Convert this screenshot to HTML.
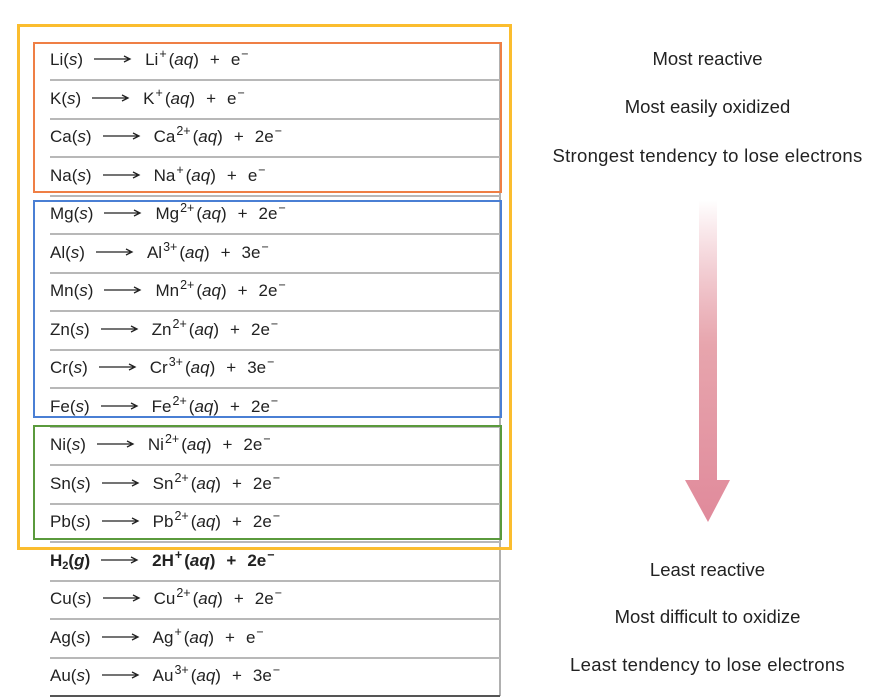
<!DOCTYPE html>
<html><head><meta charset="utf-8"><style>
body{margin:0;width:895px;height:696px;background:#fff;position:relative;overflow:hidden;font-family:"Liberation Sans",sans-serif;color:#222}
.row{position:absolute;left:50px;width:450px;height:38px;border-bottom:2px solid #b8b8b8;font-size:17px;line-height:38px;white-space:nowrap}
.row i{font-style:italic}
.row sup{font-size:12.5px;vertical-align:7px;line-height:0;margin:0 2px 0 1px}
.row sub{font-size:11px;vertical-align:-3px;line-height:0}
.p{margin:0 11px}
.ar{display:inline-block;width:38px;height:10px;margin:0 13px 0 11px;vertical-align:1px}
.b{font-weight:bold}
.vl{position:absolute;left:499px;top:42px;width:2px;height:654px;background:#b0b0b0}
.box{position:absolute;box-sizing:border-box}
.rt{position:absolute;left:520px;width:375px;text-align:center;font-size:18.5px;color:#222}
</style></head><body>
<div class="vl"></div>
<div class="row" style="top:41px">Li(<i>s</i>)<svg class="ar" viewBox="0 0 38 10"><path d="M0 5H35M30 2L36 5L30 8" stroke="#222" stroke-width="1.3" fill="none"/></svg>Li<sup>+</sup>(<i>aq</i>)<span class="p">+</span>e<sup>−</sup></div>
<div class="row" style="top:79.5px">K(<i>s</i>)<svg class="ar" viewBox="0 0 38 10"><path d="M0 5H35M30 2L36 5L30 8" stroke="#222" stroke-width="1.3" fill="none"/></svg>K<sup>+</sup>(<i>aq</i>)<span class="p">+</span>e<sup>−</sup></div>
<div class="row" style="top:118px">Ca(<i>s</i>)<svg class="ar" viewBox="0 0 38 10"><path d="M0 5H35M30 2L36 5L30 8" stroke="#222" stroke-width="1.3" fill="none"/></svg>Ca<sup>2+</sup>(<i>aq</i>)<span class="p">+</span>2e<sup>−</sup></div>
<div class="row" style="top:156.5px">Na(<i>s</i>)<svg class="ar" viewBox="0 0 38 10"><path d="M0 5H35M30 2L36 5L30 8" stroke="#222" stroke-width="1.3" fill="none"/></svg>Na<sup>+</sup>(<i>aq</i>)<span class="p">+</span>e<sup>−</sup></div>
<div class="row" style="top:195px">Mg(<i>s</i>)<svg class="ar" viewBox="0 0 38 10"><path d="M0 5H35M30 2L36 5L30 8" stroke="#222" stroke-width="1.3" fill="none"/></svg>Mg<sup>2+</sup>(<i>aq</i>)<span class="p">+</span>2e<sup>−</sup></div>
<div class="row" style="top:233.5px">Al(<i>s</i>)<svg class="ar" viewBox="0 0 38 10"><path d="M0 5H35M30 2L36 5L30 8" stroke="#222" stroke-width="1.3" fill="none"/></svg>Al<sup>3+</sup>(<i>aq</i>)<span class="p">+</span>3e<sup>−</sup></div>
<div class="row" style="top:272px">Mn(<i>s</i>)<svg class="ar" viewBox="0 0 38 10"><path d="M0 5H35M30 2L36 5L30 8" stroke="#222" stroke-width="1.3" fill="none"/></svg>Mn<sup>2+</sup>(<i>aq</i>)<span class="p">+</span>2e<sup>−</sup></div>
<div class="row" style="top:310.5px">Zn(<i>s</i>)<svg class="ar" viewBox="0 0 38 10"><path d="M0 5H35M30 2L36 5L30 8" stroke="#222" stroke-width="1.3" fill="none"/></svg>Zn<sup>2+</sup>(<i>aq</i>)<span class="p">+</span>2e<sup>−</sup></div>
<div class="row" style="top:349px">Cr(<i>s</i>)<svg class="ar" viewBox="0 0 38 10"><path d="M0 5H35M30 2L36 5L30 8" stroke="#222" stroke-width="1.3" fill="none"/></svg>Cr<sup>3+</sup>(<i>aq</i>)<span class="p">+</span>3e<sup>−</sup></div>
<div class="row" style="top:387.5px">Fe(<i>s</i>)<svg class="ar" viewBox="0 0 38 10"><path d="M0 5H35M30 2L36 5L30 8" stroke="#222" stroke-width="1.3" fill="none"/></svg>Fe<sup>2+</sup>(<i>aq</i>)<span class="p">+</span>2e<sup>−</sup></div>
<div class="row" style="top:426px">Ni(<i>s</i>)<svg class="ar" viewBox="0 0 38 10"><path d="M0 5H35M30 2L36 5L30 8" stroke="#222" stroke-width="1.3" fill="none"/></svg>Ni<sup>2+</sup>(<i>aq</i>)<span class="p">+</span>2e<sup>−</sup></div>
<div class="row" style="top:464.5px">Sn(<i>s</i>)<svg class="ar" viewBox="0 0 38 10"><path d="M0 5H35M30 2L36 5L30 8" stroke="#222" stroke-width="1.3" fill="none"/></svg>Sn<sup>2+</sup>(<i>aq</i>)<span class="p">+</span>2e<sup>−</sup></div>
<div class="row" style="top:503px">Pb(<i>s</i>)<svg class="ar" viewBox="0 0 38 10"><path d="M0 5H35M30 2L36 5L30 8" stroke="#222" stroke-width="1.3" fill="none"/></svg>Pb<sup>2+</sup>(<i>aq</i>)<span class="p">+</span>2e<sup>−</sup></div>
<div class="row b" style="top:541.5px">H<sub>2</sub>(<i>g</i>)<svg class="ar" viewBox="0 0 38 10"><path d="M0 5H35M30 2L36 5L30 8" stroke="#222" stroke-width="1.3" fill="none"/></svg>2H<sup>+</sup>(<i>aq</i>)<span class="p">+</span>2e<sup>−</sup></div>
<div class="row" style="top:580px">Cu(<i>s</i>)<svg class="ar" viewBox="0 0 38 10"><path d="M0 5H35M30 2L36 5L30 8" stroke="#222" stroke-width="1.3" fill="none"/></svg>Cu<sup>2+</sup>(<i>aq</i>)<span class="p">+</span>2e<sup>−</sup></div>
<div class="row" style="top:618.5px">Ag(<i>s</i>)<svg class="ar" viewBox="0 0 38 10"><path d="M0 5H35M30 2L36 5L30 8" stroke="#222" stroke-width="1.3" fill="none"/></svg>Ag<sup>+</sup>(<i>aq</i>)<span class="p">+</span>e<sup>−</sup></div>
<div class="row" style="top:657px;border-bottom-color:#555">Au(<i>s</i>)<svg class="ar" viewBox="0 0 38 10"><path d="M0 5H35M30 2L36 5L30 8" stroke="#222" stroke-width="1.3" fill="none"/></svg>Au<sup>3+</sup>(<i>aq</i>)<span class="p">+</span>3e<sup>−</sup></div>

<div class="box" style="left:17px;top:24px;width:495px;height:526px;border:3px solid #fbbd2e"></div>
<div class="box" style="left:33px;top:42px;width:469px;height:151px;border:2px solid #ef7f45"></div>
<div class="box" style="left:33px;top:200px;width:469px;height:218px;border:2px solid #4a7fd4"></div>
<div class="box" style="left:33px;top:425px;width:469px;height:115px;border:2px solid #5a9a3c"></div>

<div class="rt" style="top:48px">Most reactive</div>
<div class="rt" style="top:96px">Most easily oxidized</div>
<div class="rt" style="top:145px;letter-spacing:0.3px">Strongest tendency to lose electrons</div>
<div class="rt" style="top:559px">Least reactive</div>
<div class="rt" style="top:606px">Most difficult to oxidize</div>
<div class="rt" style="top:654px;letter-spacing:0.3px">Least tendency to lose electrons</div>

<svg style="position:absolute;left:680px;top:195px" width="56" height="330">
<defs><linearGradient id="g" x1="0" y1="0" x2="0" y2="1"><stop offset="0" stop-color="#e3909e" stop-opacity="0"/><stop offset="0.45" stop-color="#e7a5ad"/><stop offset="1" stop-color="#e08a9b"/></linearGradient></defs>
<path d="M19 5H37V285H50L28 327L5 285H19Z" fill="url(#g)"/>
</svg>
</body></html>
